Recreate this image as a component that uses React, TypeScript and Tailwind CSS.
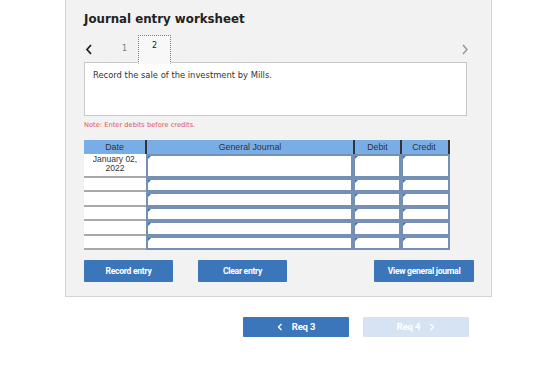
import React from "react";

const rows = [0, 1, 2, 3, 4, 5];

function Marker() {
  return (
    <svg className="absolute left-0 top-0" width="3" height="3" viewBox="0 0 3 3">
      <path d="M0 0 L3 0 L0 3 Z" fill="#3b76bb" />
    </svg>
  );
}

function InputCell({ w, h }: { w: string; h: string }) {
  return (
    <div className={`${w} ${h} relative bg-white border-2 border-[#7590b5] box-border`}>
      <Marker />
    </div>
  );
}

export default function App() {
  return (
    <div className="w-[560px] h-[381px] bg-white overflow-hidden" style={{ fontFamily: '"DejaVu Sans", Verdana, sans-serif' }}>
      <div className="ml-[65px] w-[427px] h-[297px] bg-[#f2f2f2] border-x border-b border-[#d4d4d4] pl-[18px] pt-[11px] box-border">
        <div className="text-[11.8px] leading-[16px] font-bold text-[#222]">Journal entry worksheet</div>
        <div className="mt-[8px] flex items-center h-[28px] w-[383px] relative z-10">
          <span className="w-[38px] flex items-center pl-[1px]">
            <svg width="8" height="11" viewBox="0 0 8 11"><path d="M6 1 L2 5.5 L6 10" stroke="#222" strokeWidth="1.8" fill="none" /></svg>
          </span>
          <span className="w-[16px] text-[8px] text-[#777]">1</span>
          <div className="w-[33px] h-[29px] mt-[1px] bg-[#f8f8f8] border border-dotted border-[#5b7fc0] border-b-[#f8f8f8] flex items-start justify-center pt-[4px] text-[8px] text-[#222]">2</div>
          <span className="ml-auto mr-[-2px]">
            <svg width="8" height="11" viewBox="0 0 8 11"><path d="M2 1 L6 5.5 L2 10" stroke="#999" strokeWidth="1.5" fill="none" /></svg>
          </span>
        </div>
        <div className="w-[383px] h-[54px] bg-white border border-[#c8c8c8] -mt-[1px] px-[8px] pt-[7px] text-[8.4px] text-[#333] leading-[10px]">
          Record the sale of the investment by Mills.
        </div>
        <div className="mt-[5px] text-[6.7px] leading-[9px] text-[#e0565b]">Note: Enter debits before credits.</div>
        <div className="mt-[10px] w-[366px]" style={{ fontFamily: '"Liberation Sans", Arial, sans-serif' }}>
          <div className="flex h-[14px] bg-[#78ade6] text-[8.8px] text-[#333] leading-[14px] border-r-2 border-[#333] box-content">
            <div className="w-[61px] text-center">Date</div>
            <div className="w-[208px] text-center border-l-2 border-[#333]">General Journal</div>
            <div className="w-[47px] text-center border-l-2 border-[#333]">Debit</div>
            <div className="w-[46px] text-center border-l-2 border-[#333]">Credit</div>
          </div>
          {rows.map((i) => {
            const h = i === 0 ? "h-[23.5px]" : "h-[14.5px]";
            return (
              <div key={i} className="flex">
                <div className={`w-[62px] ${h} bg-white border-b-2 border-[#a8a8a8] text-center text-[8.5px] leading-[8.5px] text-[#333] pt-[1px] box-border`}>
                  {i === 0 ? (
                    <>
                      January 02,
                      <br />
                      2022
                    </>
                  ) : null}
                </div>
                <InputCell w="w-[207px]" h={h} />
                <InputCell w="w-[48px]" h={h} />
                <InputCell w="w-[49px]" h={h} />
              </div>
            );
          })}
        </div>
        <div className="mt-[10px] flex w-[390px] text-[8.6px] font-bold text-white tracking-[-0.3px]" style={{ fontFamily: 'Roboto, "Liberation Sans", sans-serif' }}>
          <div className="w-[89px] h-[22px] bg-[#3b76bb] rounded-[1px] flex items-center justify-center">Record entry</div>
          <div className="ml-[25px] w-[89px] h-[22px] bg-[#3b76bb] rounded-[1px] flex items-center justify-center">Clear entry</div>
          <div className="ml-auto w-[100px] h-[22px] bg-[#3b76bb] rounded-[1px] flex items-center justify-center">View general journal</div>
        </div>
      </div>
      <div className="flex mt-[20px] ml-[243px] text-[9.5px] font-bold text-white tracking-[-0.2px]" style={{ fontFamily: 'Roboto, "Liberation Sans", sans-serif' }}>
        <div className="w-[106px] h-[20px] bg-[#3b76bb] rounded-[1px] flex items-center justify-center gap-[9px]">
          <svg width="6" height="8" viewBox="0 0 6 8"><path d="M4.5 1 L1.5 4 L4.5 7" stroke="#fff" strokeWidth="1.4" fill="none" /></svg>
          <span>Req 3</span>
        </div>
        <div className="ml-[14px] w-[106px] h-[20px] bg-[#d6e3f2] rounded-[1px] flex items-center justify-center gap-[9px]">
          <span>Req 4</span>
          <svg width="6" height="8" viewBox="0 0 6 8"><path d="M1.5 1 L4.5 4 L1.5 7" stroke="#fff" strokeWidth="1.4" fill="none" /></svg>
        </div>
      </div>
    </div>
  );
}
